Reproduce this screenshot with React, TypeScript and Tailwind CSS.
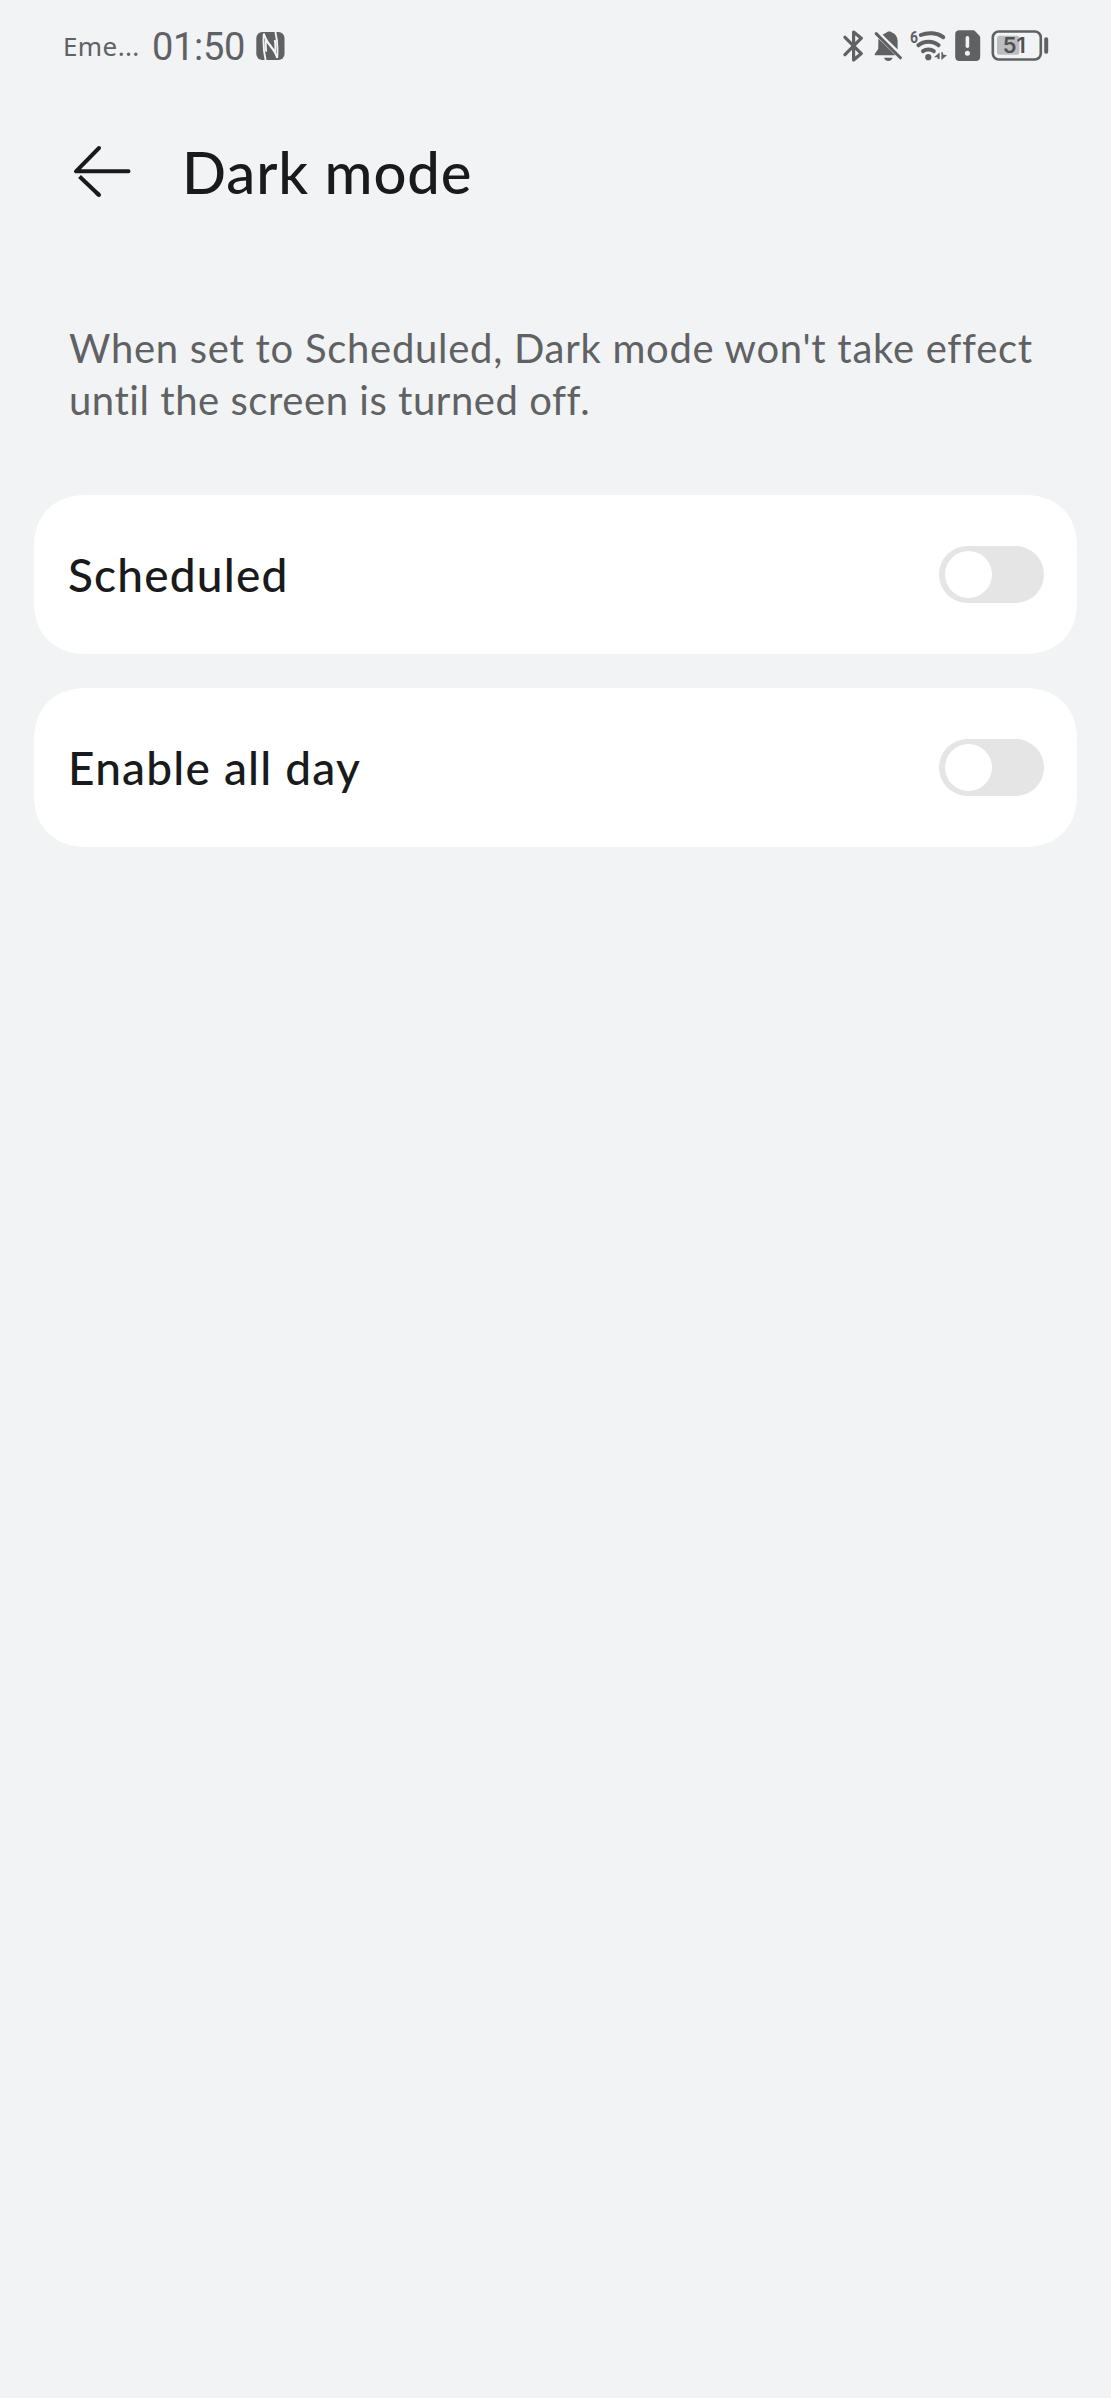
import { useState } from "react"

function NfcIcon() {
    return (
        <svg width="29" height="28" viewBox="0 0 29 28" fill="none">
            <rect x="0.3" y="0" width="28.2" height="28" rx="6" fill="#606163" />
            <path d="M9.6 28 C7.6 20 7.2 10 7.8 1.5 C10 8 14 14.5 19 19.8 C19.6 15.5 19.4 11.5 18.8 8" stroke="#f1f3f5" strokeWidth="1.9" />
            <path d="M19.4 0 C21.4 8 21.8 18 21.2 26 C19 20 15 13.5 10 8.4 C9.6 12 9.7 16 10.2 19.6" stroke="#f1f3f5" strokeWidth="1.9" />
        </svg>
    )
}

function BluetoothIcon() {
    return (
        <svg width="21" height="32" viewBox="0 0 21 32" fill="none" stroke="#606163" strokeWidth="3.2" strokeLinecap="round" strokeLinejoin="round">
            <path d="M2 7.3 L18.3 23.6 L10.6 30 V2 L18.3 8.2 L2 24.7" />
        </svg>
    )
}

function MutedBellIcon() {
    return (
        <svg width="28" height="32" viewBox="0 0 28 32" fill="#606163">
            <path d="M8.6 4.8 L12.5 2.6 C13.5 1 17 1 18 2.6 C21.5 4 23.5 7 23.6 11 V19.6 Z" />
            <path d="M4.4 8.4 L21.4 25.3 H1.2 C0.4 24.6 0.6 23.8 1.2 23.2 L4.2 19 Z" />
            <path d="M10 27.8 H18.6 C17.8 30 16.3 31 14.3 31 C12.3 31 10.8 30 10 27.8 Z" />
            <path d="M2.2 3.6 L26.4 27.8" stroke="#606163" strokeWidth="3" strokeLinecap="round" />
        </svg>
    )
}

function WifiIcon() {
    return (
        <svg width="44" height="44" viewBox="-6 -6 44 44" fill="none">
            <text x="0" y="12.8" fontSize="16.5" fontWeight="700" fill="#606163" fontFamily="Roboto, sans-serif" textLength="8" lengthAdjust="spacingAndGlyphs">6</text>
            <g stroke="#606163" strokeWidth="4" strokeLinecap="round">
                <path d="M10.8 5 C18 2.2 27 2.6 33.2 7.2" />
                <path d="M8.4 15.3 C14 10.4 23 10.4 28.6 15.3" />
                <path d="M13 21.2 C16 18.9 20.8 18.9 23.8 21.2" />
            </g>
            <circle cx="18.3" cy="27.2" r="3.1" fill="#606163" />
            <path d="M24 27.3 L29.6 22.4 V29 H27.6 V27.3 Z" fill="#606163" />
            <path d="M31.4 22.2 H33 V24.6 L37 25.2 L31.4 30 Z" fill="#606163" />
        </svg>
    )
}

function SimAlertIcon() {
    return (
        <svg width="26" height="32" viewBox="0 0 26 32" fill="none">
            <path d="M4.5 0.2 H18 C19 0.2 19.6 0.5 20.2 1.2 L24.2 5.4 C24.9 6.2 25.2 6.8 25.2 7.8 V26.8 C25.2 29.6 23.6 31 21 31 H4.5 C1.8 31 0.2 29.6 0.2 26.8 V4.4 C0.2 1.6 1.8 0.2 4.5 0.2 Z" fill="#606163" />
            <path d="M12.4 7.8 V16.2" stroke="#f1f3f5" strokeWidth="3.6" strokeLinecap="round" />
            <circle cx="12.4" cy="23.3" r="2.5" fill="#f1f3f5" />
        </svg>
    )
}

function BatteryIcon({ level }: { level: number }) {
    return (
        <svg width="58" height="32" viewBox="0 0 58 32" fill="none">
            <rect x="1.8" y="1.5" width="48" height="28" rx="6" stroke="#606163" strokeWidth="2.6" />
            <rect x="6" y="5.7" width={(level / 100) * 44} height="19" rx="2.5" fill="#bcbdbf" />
            <text x="23.2" y="22.5" fontSize="22" fontWeight="600" fill="#505153" textAnchor="middle" fontFamily="Inter, sans-serif" textLength="23" lengthAdjust="spacingAndGlyphs">
                {level}
            </text>
            <rect x="53.2" y="7.3" width="4" height="16.4" rx="1.8" fill="#606163" />
        </svg>
    )
}

function StatusBar() {
    return (
        <div className="h-[92px] pl-[63px] pr-[62px] flex items-center justify-between text-[#606163]">
            <div className="flex items-center">
                <span className="w-[89px] text-[26px] tracking-[0.4px] whitespace-nowrap font-['Noto_Sans',sans-serif]">Eme...</span>
                <span className="w-[104px] pt-[2px] text-[38px] leading-none tracking-[-0.3px] font-['Roboto',sans-serif]">01:50</span>
                <NfcIcon />
            </div>
            <div className="flex items-center">
                <BluetoothIcon />
                <div className="ml-[10px]"><MutedBellIcon /></div>
                <div className="ml-[2px]"><WifiIcon /></div>
                <div className="ml-[7px]"><SimAlertIcon /></div>
                <div className="ml-[10px]"><BatteryIcon level={51} /></div>
            </div>
        </div>
    )
}

function SettingRow({ label }: { label: string }) {
    const [enabled, setEnabled] = useState(false)

    return (
        <div className="h-[159px] pl-[34px] pr-[33px] flex items-center justify-between bg-white rounded-[52px] [corner-shape:superellipse(1.15)]">
            <span className="text-[46px] font-medium tracking-[1.2px] text-[#191a1b]">{label}</span>
            <button
                role="switch"
                aria-checked={enabled}
                aria-label={label}
                onClick={() => setEnabled(!enabled)}
                className={`w-[105px] h-[57px] px-[6px] rounded-full flex items-center ${enabled ? "bg-blue-600 justify-end" : "bg-[#e5e5e5]"}`}
            >
                <span className="size-[47px] rounded-full bg-white" />
            </button>
        </div>
    )
}

export default function App() {
    return (
        <div className="min-h-screen bg-[#f1f3f5] font-['Lato',sans-serif]">
            <StatusBar />

            {/* Header */}
            <header className="h-[160px] pl-[73px] flex items-center">
                <button aria-label="Back">
                    <svg width="60" height="54" viewBox="0 0 60 54" fill="none" stroke="#191a1b" strokeWidth="4" strokeLinecap="round" strokeLinejoin="round">
                        <path d="M26 3 L3 26.3 H55.5" />
                        <path d="M6.5 31.5 L26 50" strokeLinecap="butt" />
                        <path d="M24 48.2 L26 50" />
                    </svg>
                </button>
                <h1 className="ml-[49px] text-[58px] font-medium tracking-[0.9px] text-[#191a1b] leading-none">Dark mode</h1>
            </header>

            <p className="mt-[70px] ml-[69px] text-[40px] leading-[52px] tracking-[0.72px] text-[#606163] whitespace-nowrap">
                When set to Scheduled, Dark mode won't take effect
                <br />
                <span className="tracking-[0.55px]">until the screen is turned off.</span>
            </p>

            {/* Mode options */}
            <div className="mt-[69px] mx-[34px] flex flex-col gap-[34px]">
                <SettingRow label="Scheduled" />
                <SettingRow label="Enable all day" />
            </div>
        </div>
    )
}
